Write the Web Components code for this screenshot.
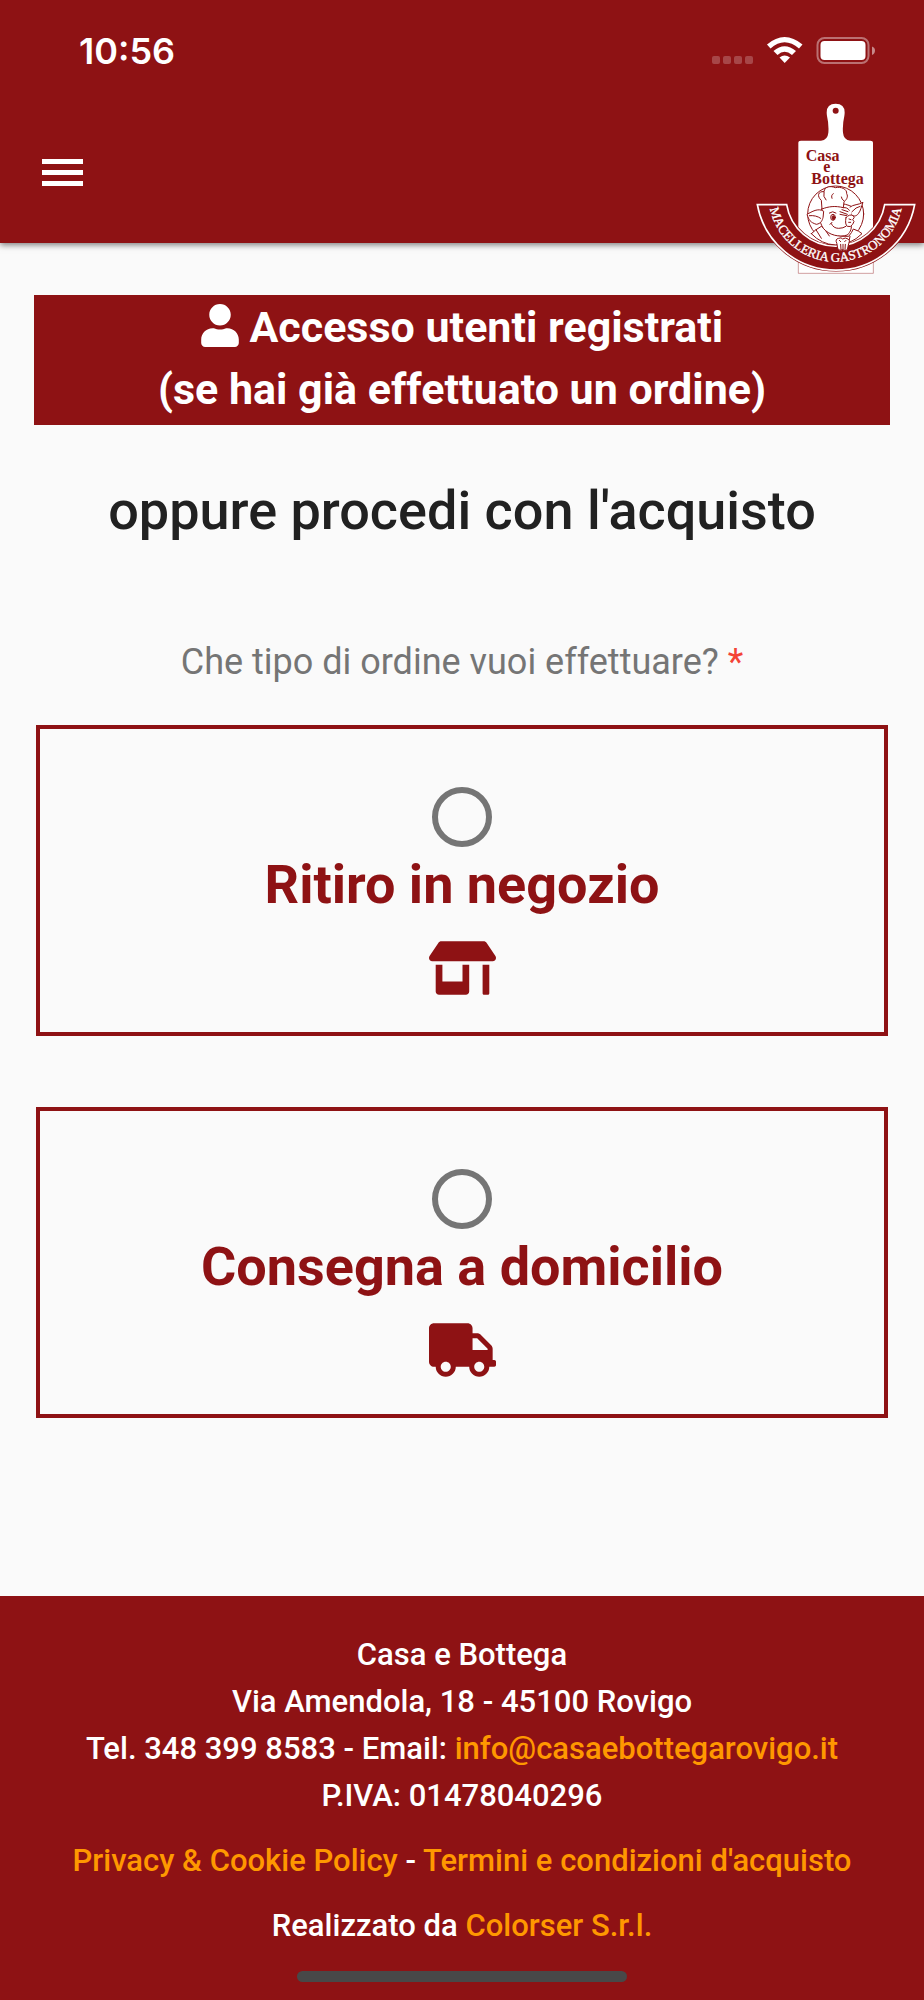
<!DOCTYPE html>
<html lang="it">
<head>
<meta charset="utf-8">
<meta name="viewport" content="width=device-width, initial-scale=1">
<title>Casa e Bottega</title>
<style>
    :root {
        --brand: #8e1214;
        --accent: #ff9800;
        --page: #fafafa;
        --muted: #757575;
    }
    body {
        margin: 0;
        background: var(--page);
        color: #212121;
        font-family: Roboto, "Liberation Sans", sans-serif;
    }
</style>
</head>
<body>
<shop-page>
    <shop-header slot="header">
        <status-bar slot="status" time="10:56"></status-bar>
        <shop-logo slot="logo"></shop-logo>
    </shop-header>

    <login-banner href="#login">Accesso utenti registrati<br>(se hai già effettuato un ordine)</login-banner>
    <page-heading>oppure procedi con l'acquisto</page-heading>

    <order-type>
        <span slot="question">Che tipo di ordine vuoi effettuare?</span>
        <order-card icon="store">
            <input slot="control" type="radio" name="order" id="pickup">
            <label slot="title" for="pickup">Ritiro in negozio</label>
        </order-card>
        <order-card icon="truck">
            <input slot="control" type="radio" name="order" id="delivery">
            <label slot="title" for="delivery">Consegna a domicilio</label>
        </order-card>
    </order-type>

    <shop-footer slot="footer"></shop-footer>
</shop-page>

<script>
// 1. Icons
const icons = {
    user: {
        box: '0 0 448 512',
        path: 'M224 256c70.7 0 128-57.3 128-128S294.7 0 224 0 96 57.3 96 128s57.3 128 128 128zm89.6 32h-16.7c-22.2 10.2-46.9 16-72.9 16s-50.6-5.8-72.9-16h-16.7C60.2 288 0 348.2 0 422.4V464c0 26.5 21.5 48 48 48h352c26.5 0 48-21.5 48-48v-41.6c0-74.2-60.2-134.4-134.4-134.4z'
    },
    store: {
        box: '0 0 640 512',
        path: 'M320 384H128V224H64v256c0 17.7 14.3 32 32 32h256c17.7 0 32-14.3 32-32V224h-64v160zm314.6-241.8l-85.3-128c-6-8.9-16-14.2-26.7-14.2H117.4c-10.7 0-20.7 5.3-26.6 14.2l-85.3 128c-14.2 21.3 1 49.8 26.6 49.8H608c25.5 0 40.7-28.5 26.6-49.8zM512 496c0 8.8 7.2 16 16 16h32c8.8 0 16-7.2 16-16V224h-64v272z'
    },
    truck: {
        box: '0 0 640 512',
        path: 'M624 352h-16V243.9c0-12.7-5.1-24.9-14.1-33.9L494 110.1c-9-9-21.2-14.1-33.9-14.1H416V48c0-26.5-21.5-48-48-48H48C21.5 0 0 21.5 0 48v320c0 26.5 21.5 48 48 48h16c0 53 43 96 96 96s96-43 96-96h128c0 53 43 96 96 96s96-43 96-96h48c8.8 0 16-7.2 16-16v-32c0-8.8-7.2-16-16-16zM160 464c-26.5 0-48-21.5-48-48s21.5-48 48-48 48 21.5 48 48-21.5 48-48 48zm320 0c-26.5 0-48-21.5-48-48s21.5-48 48-48 48 21.5 48 48-21.5 48-48 48zm80-208H416V144h44.1l99.9 99.9V256z'
    }
};

function iconSvg(name) {
    const icon = icons[name];
    return `<svg viewBox="${icon.box}" fill="currentColor" aria-hidden="true"><path d="${icon.path}"/></svg>`;
}

// 2. Base class: every element only provides its template
class ShopElement extends HTMLElement {
    connectedCallback() {
        if (this.shadowRoot) return;
        this.attachShadow({ mode: 'open' }).innerHTML = this.template();
    }
}

// 3. Page shell
class ShopPage extends ShopElement {
    template() {
        return `
            <style>
                :host { display: flex; flex-direction: column; min-height: 100vh; }
                main { flex: 1; padding: 52px 34px 80px; }
            </style>
            <slot name="header"></slot>
            <main><slot></slot></main>
            <slot name="footer"></slot>
        `;
    }
}
customElements.define('shop-page', ShopPage);

class StatusBar extends ShopElement {
    template() {
        return `
            <style>
                :host {
                    display: flex;
                    justify-content: space-between;
                    align-items: center;
                    height: 102px;
                    padding: 0 48px 0 79px;
                    color: #fff;
                    font: 600 36px/44px Inter, "Liberation Sans", sans-serif;
                }
                svg { display: block; width: 164px; height: 28px; }
            </style>
            <time>${this.getAttribute('time')}</time>
            <svg viewBox="0 0 164 28" fill="#fff" aria-hidden="true">
                <g opacity=".22">
                    <rect x="0" y="19" width="8" height="8" rx="2"/>
                    <rect x="11" y="19" width="8" height="8" rx="2"/>
                    <rect x="22" y="19" width="8" height="8" rx="2"/>
                    <rect x="33" y="19" width="8" height="8" rx="2"/>
                </g>
                <path d="M55 7.500Q72.500-7.500 90.500 7.500L87 11.500Q72.500-1 58.500 11.500Z"/>
                <path d="M61.500 14Q72.500 4.500 84 14L80 18Q72.500 11.500 65.500 18Z"/>
                <path d="M67.500 20.500Q72.500 16.500 78 20.500L72.700 26Z"/>
                <rect x="105.500" y="1" width="51" height="25" rx="7" fill="none" stroke="#fff" stroke-width="2" opacity=".4"/>
                <rect x="108.500" y="4" width="45" height="19" rx="4"/>
                <path d="M160 9.500q3 1 3 4t-3 4.500z" opacity=".5"/>
            </svg>
        `;
    }
}
customElements.define('status-bar', StatusBar);

class ShopHeader extends ShopElement {
    template() {
        return `
            <style>
                :host {
                    display: block;
                    position: relative;
                    background: var(--brand);
                    box-shadow: 0 2px 6px rgba(0, 0, 0, .5);
                }
                nav { display: flex; align-items: center; height: 141px; padding: 0 42px; }
                button {
                    display: flex;
                    flex-direction: column;
                    gap: 6px;
                    width: 41px;
                    padding: 0;
                    border: 0;
                    background: none;
                    cursor: pointer;
                }
                button span { height: 5px; background: #fff; }
                /* the logo hangs over the bottom edge of the bar */
                ::slotted([slot="logo"]) { position: absolute; top: 103px; right: 8px; }
            </style>
            <slot name="status"></slot>
            <nav>
                <button type="button" aria-label="Menu"><span></span><span></span><span></span></button>
            </nav>
            <slot name="logo"></slot>
        `;
    }
}
customElements.define('shop-header', ShopHeader);

class ShopLogo extends ShopElement {
    template() {
        return `
            <style>
                :host { display: block; width: 160px; height: 172px; }
                svg { display: block; width: 100%; height: 100%; }
                text { font-family: "Liberation Serif", serif; }
                .name { font-size: 48px; font-weight: 700; fill: #8e1214; }
                .ring { font-size: 39px; fill: #fff; stroke: #fff; stroke-width: 1; }
                .pig { fill: #fff; stroke: #8e1214; stroke-width: 3; stroke-linejoin: round; stroke-linecap: round; }
            </style>
            <svg viewBox="48 40 480 516" role="img" aria-label="Casa e Bottega">
                <!-- chopping board -->
                <path d="M175 552V160q0-7 8-7h60q20-2 22-24q2-24-4-50q-6-37 26-37t26 37q-6 26-4 50q2 22 22 24h60q8 0 8 7v392z" fill="#fff"/>
                <path d="M175 500V551H400V500" fill="none" stroke="#8e1214" stroke-width="2" opacity=".6"/>
                <circle cx="287" cy="63" r="9" fill="#8e1214"/>
                <text class="name" x="197" y="213">Casa</text>
                <text class="name" x="250" y="246">e</text>
                <text class="name" x="214" y="282">Bottega</text>

                <!-- pig -->
                <g class="pig">
                    <circle cx="287" cy="373" r="84"/>
                    <path d="M214 432q12-12 30-22q40 34 82 30q10-12 14-22q18 6 26 14q-34 34-80 34q-42-2-72-34z"/>
                    <path d="M228 420l16 26M250 413l18 26M330 440l-4 20" fill="none"/>
                    <path d="M250 350c-14 22-14 46 0 66c16 20 48 28 72 20c10-10 14-20 12-38l4-46c-28-14-58-14-88-2z"/>
                    <path d="M250 364c-16-10-34 2-49 10c6 18 10 24 28 30c14-2 18-12 20-20z"/>
                    <path d="M208 378q20-2 34 8" fill="none"/>
                    <path d="M330 352c10-8 26-6 39-14c-6 14-6 24-14 34c-6 8-12 8-18 6"/>
                    <path d="M336 366q12-14 24-16" fill="none"/>
                    <path d="M246 358l-2-26c-14-12-10-28 8-26c2-16 20-18 34-12c16-4 36 4 34 18c6 10-2 20-8 24l-2 18c-24-6-44-4-64 4z"/>
                    <path d="M258 331q-10-10-6-24M276 326q-4-10 4-14M312 334q-8-6-8-12" fill="none"/>
                    <path d="M318 384q10-12 22-6q6 6-2 12q8 4 0 14q-6 10-16 6q-8-6-4-26z"/>
                    <path d="M327 388l6 2M326 398l6 0M300 366l22 8M300 374l20 4M306 360l18 6M310 354q12-2 18 8M268 370q10-8 20 0" fill="none"/>
                    <path d="M274 402q6 14 22 14q14 0 22-6M270 404l6-6" fill="none"/>
                    <ellipse cx="279" cy="383" rx="7" ry="9"/>
                    <ellipse cx="280" cy="384" rx="4" ry="6" fill="#8e1214"/>
                </g>

                <!-- ribbon -->
                <path d="M52 345H140A149 149 0 0 0 434 345H524A240 240 0 0 1 52 345Z" fill="#8e1214" stroke="#8e1214" stroke-width="9"/>
                <path d="M52 345H140A149 149 0 0 0 434 345H524A240 240 0 0 1 52 345Z" fill="#8e1214" stroke="#fff" stroke-width="5"/>
                <path id="arc" d="M85 314A202 202 0 0 0 489 314" fill="none"/>
                <text class="ring" text-anchor="middle"><textPath href="#arc" startOffset="50%">MACELLERIA GASTRONOMIA</textPath></text>

                <!-- trotters over the ribbon -->
                <g class="pig">
                    <path d="M290 460q-6-12 6-14q8-4 12 2q8-6 16 0q8 4 2 14l-4 18q-8 6-14 0q-8 6-14-2z"/>
                    <path d="M302 464l1 16M309 464v16M316 464l-1 16M298 452l4 4M318 452l-4 4" fill="none"/>
                </g>
            </svg>
        `;
    }
}
customElements.define('shop-logo', ShopLogo);

// 4. Content
class LoginBanner extends ShopElement {
    template() {
        return `
            <style>
                :host { display: block; }
                a {
                    display: block;
                    padding: 1px 0 5px;
                    background: var(--brand);
                    color: #fff;
                    font-size: 43px;
                    font-weight: 700;
                    line-height: 62px;
                    text-align: center;
                    text-decoration: none;
                }
                svg { width: 38px; height: 43px; vertical-align: -5px; }
            </style>
            <a href="${this.getAttribute('href')}">${iconSvg('user')} <slot></slot></a>
        `;
    }
}
customElements.define('login-banner', LoginBanner);

class PageHeading extends ShopElement {
    template() {
        return `
            <style>
                :host { display: block; margin: 54px 0 98px; }
                h1 { margin: 0; font-size: 54px; font-weight: 500; line-height: 64px; text-align: center; }
            </style>
            <h1><slot></slot></h1>
        `;
    }
}
customElements.define('page-heading', PageHeading);

class OrderType extends ShopElement {
    template() {
        return `
            <style>
                :host { display: block; }
                fieldset { margin: 0; padding: 0 2px; border: 0; }
                legend {
                    width: 100%;
                    padding: 0 0 42px;
                    color: var(--muted);
                    font-size: 36px;
                    line-height: 42px;
                    text-align: center;
                }
                em { color: #f44336; font-style: normal; }
                .cards { display: grid; gap: 71px; }
            </style>
            <fieldset>
                <legend><slot name="question"></slot> <em>*</em></legend>
                <div class="cards"><slot></slot></div>
            </fieldset>
        `;
    }
}
customElements.define('order-type', OrderType);

class OrderCard extends ShopElement {
    template() {
        return `
            <style>
                :host {
                    display: flex;
                    flex-direction: column;
                    align-items: center;
                    padding: 58px 20px 37px;
                    border: 4px solid var(--brand);
                    color: var(--brand);
                }
                ::slotted(input) {
                    appearance: none;
                    box-sizing: border-box;
                    width: 60px;
                    height: 60px;
                    margin: 0;
                    border: 6px solid var(--muted);
                    border-radius: 50%;
                }
                ::slotted(input:checked) {
                    border-color: var(--brand);
                    background: radial-gradient(var(--brand) 45%, transparent 50%);
                }
                ::slotted(label) { margin: 6px 0 24px; font-size: 54px; font-weight: 700; line-height: 64px; }
                svg { display: block; width: 67px; height: 54px; }
            </style>
            <slot name="control"></slot>
            <slot name="title"></slot>
            ${iconSvg(this.getAttribute('icon'))}
        `;
    }
}
customElements.define('order-card', OrderCard);

// 5. Footer
class ShopFooter extends ShopElement {
    template() {
        return `
            <style>
                :host {
                    display: block;
                    padding: 35px 20px 18px;
                    background: var(--brand);
                    color: #fff;
                    font-size: 31px;
                    font-weight: 500;
                    line-height: 47px;
                    text-align: center;
                }
                p { margin: 0 0 18px; }
                a { color: var(--accent); text-decoration: none; }
                .home { width: 330px; height: 11px; margin: 22px auto 0; border-radius: 6px; background: #484848; }
            </style>
            <footer>
                <p>
                    Casa e Bottega<br>
                    Via Amendola, 18 - 45100 Rovigo<br>
                    Tel. 348 399 8583 - Email: <a href="mailto:info@casaebottegarovigo.it">info@casaebottegarovigo.it</a><br>
                    P.IVA: 01478040296
                </p>
                <p><a href="#privacy">Privacy &amp; Cookie Policy</a> - <a href="#termini">Termini e condizioni d'acquisto</a></p>
                <p>Realizzato da <a href="#colorser">Colorser S.r.l.</a></p>
            </footer>
            <div class="home"></div>
        `;
    }
}
customElements.define('shop-footer', ShopFooter);
</script>
</body>
</html>
